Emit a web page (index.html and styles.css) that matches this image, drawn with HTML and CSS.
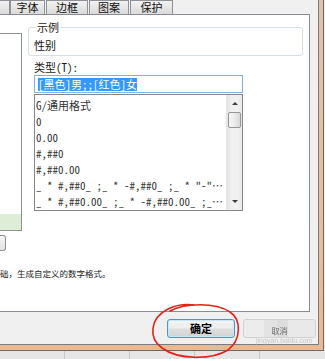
FILE: index.html
```html
<!DOCTYPE html>
<html lang="zh-CN">
<head>
<meta charset="utf-8">
<title>设置单元格格式</title>
<link rel="stylesheet" href="styles.css">
</head>
<body>
<div class="screen">
  <div class="frame">
    <div class="win">
      <div class="tabs">
        <div class="tab tab-cut"></div>
        <div class="tab tab-1">字体</div>
        <div class="tab tab-2">边框</div>
        <div class="tab tab-3">图案</div>
        <div class="tab tab-4">保护</div>
      </div>
      <div class="panel">
        <div class="panel-top">
          <div class="cat-col">
            <div class="cat-list"><div class="cat-sel"></div></div>
            <div class="cat-btn"></div>
          </div>
          <div class="main-col">
            <fieldset class="sample">
              <legend>示例</legend>
              <div class="sample-val">性别</div>
            </fieldset>
            <div class="type-label">类型(T):</div>
            <div class="type-input"><span class="sel">[黑色]男;;[红色]女</span></div>
            <div class="fmt-list">
              <ul class="fmt-items">
                <li>G/通用格式</li>
                <li>0</li>
                <li>0.00</li>
                <li>#,##0</li>
                <li>#,##0.00</li>
                <li>_ * #,##0_ ;_ * -#,##0_ ;_ * "-"…</li>
                <li>_ * #,##0.00_ ;_ * -#,##0.00_ ;_…</li>
              </ul>
              <div class="vscroll">
                <div class="arrow"><span class="tri tri-up"></span></div>
                <div class="thumb"></div>
                <div class="track"></div>
                <div class="arrow"><span class="tri tri-down"></span></div>
              </div>
            </div>
          </div>
        </div>
        <div class="hint">础，生成自定义的数字格式。</div>
      </div>
      <div class="buttons">
        <button class="btn btn-ok">确定</button>
        <button class="btn btn-cancel"><span>取消</span></button>
      </div>
    </div>
  </div>
  <div class="sheet"></div>
  <div class="wm">jingyan.baidu.com</div>
  <svg class="mark" width="325" height="359" viewBox="0 0 325 359">
    <path d="M170 311 C185 303 215 302 230 312 C242 320 241 340 228 350 C212 360 178 360 162 348 C148 338 150 318 168 309 C176 305 186 304 194 305" fill="none" stroke="#e2231a" stroke-width="1.6" stroke-linecap="round"/>
  </svg>
</div>
</body>
</html>
```

FILE: styles.css
```css
html, body {
  margin: 0;
  padding: 0;
  background: #e9e9e9;
}

.screen {
  position: relative;
  width: 325px;
  height: 359px;
  overflow: hidden;
  background: #ebebeb;
  font-family: "Noto Sans Mono CJK SC", "Noto Sans CJK SC", sans-serif;
  font-size: 11px;
  color: #1a1a1a;
}

/* window frame */
.frame {
  box-sizing: border-box;
  width: 324px;
  height: 351px;
  padding: 0 4px 5px 0;
  border-right: 1px solid #6a6a6a;
  border-bottom: 1px solid #6a6a6a;
  background: linear-gradient(180deg, #dcc3ac 0%, #e2c0a2 60%, #ebb98f 100%);
}

.win {
  box-sizing: border-box;
  width: 319px;
  height: 345px;
  border-right: 1px solid #7b7b7b;
  border-bottom: 1px solid #7b7b7b;
  background: #f0f0f0;
  display: flex;
  flex-direction: column;
}

/* tabs */
.tabs {
  display: flex;
  height: 14px;
  flex: none;
}

.tab {
  box-sizing: border-box;
  height: 14px;
  border: 1px solid #8e9197;
  border-bottom: none;
  background: linear-gradient(180deg, #f2f2f2 0%, #e6e6e6 50%, #dadada 100%);
  line-height: 13px;
  text-align: center;
  font-size: 11px;
  color: #111;
}

.tab-cut { width: 10px; border-left: none; }
.tab-1 { width: 35px; }
.tab-2 { width: 42px; margin-left: 1px; }
.tab-3 { width: 40px; margin-left: 1px; }
.tab-4 { width: 43px; margin-left: 1px; }

/* tab page */
.panel {
  box-sizing: border-box;
  width: 310px;
  height: 298px;
  flex: none;
  background: #ffffff;
  border-top: 1px solid #898c95;
  border-right: 1px solid #898c95;
  border-bottom: 1px solid #898c95;
}

.panel-top {
  display: flex;
  align-items: flex-start;
}

.cat-col {
  width: 22px;
  flex: none;
}

.cat-list {
  box-sizing: border-box;
  margin-top: 18px;
  height: 198px;
  border-top: 1px solid #8d9096;
  border-right: 1px solid #8d9096;
  border-bottom: 1px solid #8d9096;
  display: flex;
  flex-direction: column;
  justify-content: flex-end;
}

.cat-sel {
  height: 16px;
  background: #deeed6;
}

.cat-btn {
  box-sizing: border-box;
  margin-top: 4px;
  width: 6px;
  height: 16px;
  border: 1px solid #8f9092;
  border-left: none;
  border-radius: 0 3px 3px 0;
  background: linear-gradient(180deg, #f6f6f6 0%, #e4e4e4 100%);
}

.main-col {
  margin-left: 6px;
  width: 275px;
  flex: none;
}

.sample {
  margin: 6px 0 0 0;
  padding: 6px 5px 4px 5px;
  border: 1px solid #d5dfe5;
  border-radius: 3px;
  min-width: 0;
}

.sample legend {
  padding: 0 2px;
  margin-left: 1px;
  line-height: 12px;
  font-size: 11px;
  color: #1a1a1a;
}

.sample-val {
  line-height: 12px;
  font-size: 11px;
  color: #111;
}

.type-label {
  margin: 5px 0 0 6px;
  line-height: 12px;
  font-size: 11px;
  color: #1a1a1a;
}

.type-input {
  box-sizing: border-box;
  margin: 2px 0 0 6px;
  width: 209px;
  height: 18px;
  padding: 0 3px;
  border: 1px solid #7eb4ea;
  background: #fff;
  display: flex;
  align-items: center;
}

.sel {
  background: #3399ff;
  color: #fff;
  line-height: 13px;
  font-size: 11px;
}

.fmt-list {
  box-sizing: border-box;
  margin: 1px 0 0 6px;
  width: 209px;
  height: 117px;
  border: 1px solid #828790;
  display: flex;
  background: #fff;
}

.fmt-items {
  list-style: none;
  margin: 0;
  padding: 2px 0 0 1px;
  flex: 1;
  min-width: 0;
  overflow: hidden;
}

.fmt-items li {
  height: 16px;
  line-height: 16px;
  white-space: nowrap;
  overflow: hidden;
  font-size: 11px;
  color: #333;
}

.vscroll {
  width: 16px;
  flex: none;
  display: flex;
  flex-direction: column;
  background: linear-gradient(90deg, #e3e3e3 0%, #f1f1f1 30%, #f1f1f1 70%, #e8e8e8 100%);
  border-left: 1px solid #e6e6e6;
  box-sizing: border-box;
}

.arrow {
  height: 17px;
  flex: none;
  display: flex;
  align-items: center;
  justify-content: center;
}

.tri {
  width: 0;
  height: 0;
  border-left: 3px solid transparent;
  border-right: 3px solid transparent;
}

.tri-up { border-bottom: 3px solid #3a3a3a; }
.tri-down { border-top: 3px solid #3a3a3a; }

.thumb {
  box-sizing: border-box;
  height: 16px;
  margin: 0 1px 0 1px;
  border: 1px solid #979797;
  border-radius: 2px;
  background: linear-gradient(90deg, #f7f7f7 0%, #ececec 50%, #d8d8d8 100%);
  flex: none;
}

.track { flex: 1; }

.hint {
  margin-top: 17px;
  line-height: 10px;
  font-size: 8.5px;
  color: #1a1a1a;
  font-family: "Noto Sans CJK SC", sans-serif;
  white-space: nowrap;
}

/* dialog buttons */
.buttons {
  display: flex;
  justify-content: flex-end;
  gap: 8px;
  padding: 7px 2px 0 0;
}

.btn {
  box-sizing: border-box;
  height: 19px;
  margin: 0;
  padding: 0;
  border-radius: 3px;
  font-family: "Noto Sans CJK SC", sans-serif;
  font-size: 11px;
  line-height: 17px;
}

.btn-ok {
  width: 68px;
  border: 1px solid #4f93cc;
  box-shadow: inset 0 0 0 1px #c4e8fa;
  background: linear-gradient(180deg, #f4f4f4 0%, #ececec 48%, #dfdfdf 52%, #d2d2d2 100%);
  color: #000;
  font-weight: 700;
}

.btn-cancel {
  width: 73px;
  border: 1px solid #d2d2d2;
  background: linear-gradient(90deg, #ececec 0 28%, #e3e3e3 28% 46%, #dcdcdc 46% 62%, #e9e9e9 62% 100%);
  color: #6a6a6a;
  display: flex;
  align-items: flex-end;
  justify-content: center;
  overflow: hidden;
}

.btn-cancel span {
  font-size: 8px;
  line-height: 9px;
  margin-bottom: 2px;
  filter: blur(0.7px);
}

/* spreadsheet behind the dialog */
.sheet {
  height: 8px;
  background:
    linear-gradient(90deg, transparent 0 64px, #c8c8c8 64px 65px, transparent 65px 129px, #c8c8c8 129px 130px, transparent 130px 194px, #c8c8c8 194px 195px, transparent 195px 259px, #c8c8c8 259px 260px, transparent 260px),
    #e6e6e6;
}

/* overlays */
.wm {
  position: absolute;
  left: 256px;
  top: 337px;
  font-family: "Liberation Sans", sans-serif;
  font-size: 7px;
  line-height: 8px;
  color: rgba(170, 170, 170, 0.6);
  filter: blur(0.4px);
}

.mark {
  position: absolute;
  left: 0;
  top: 0;
  pointer-events: none;
}
```
